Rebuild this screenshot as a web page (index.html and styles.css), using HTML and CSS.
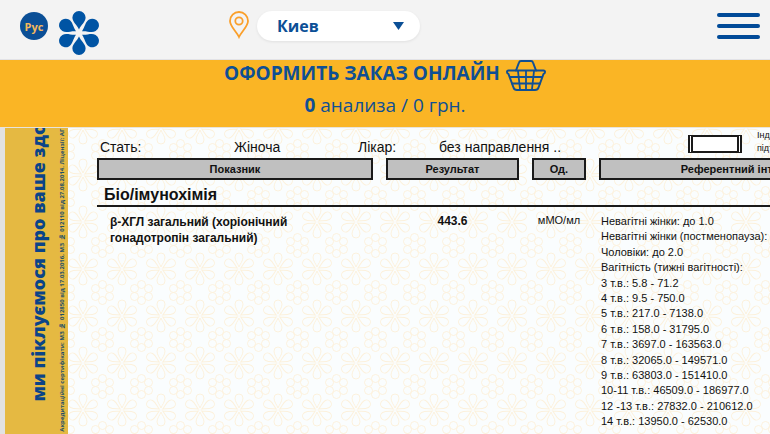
FILE: index.html
```
<!DOCTYPE html>
<html lang="ru">
<head>
	<meta charset="utf-8">
	<meta name="viewport" content="width=device-width, initial-scale=1">
	<title>Результаты анализов</title>
	<link rel="stylesheet" href="styles.css">
</head>
<body>
	<header class="topbar">
		<button type="button" class="lang">Рус</button>
		<a href="#" class="logo" aria-label="На главную">
			<svg width="44" height="46" viewBox="-22 -22 44 46" fill="#0054a4">
				<defs>
					<path id="petal" d="M0-3.500C-2-8-6.600-11-6.600-15.400a6.600 6.600 0 0 1 13.200 0C6.600-11 2-8 0-3.500z"/>
				</defs>
				<use href="#petal"/>
				<use href="#petal" transform="rotate(60)"/>
				<use href="#petal" transform="rotate(120)"/>
				<use href="#petal" transform="rotate(180)"/>
				<use href="#petal" transform="rotate(240)"/>
				<use href="#petal" transform="rotate(300)"/>
			</svg>
		</a>
		<div class="city">
			<svg width="20" height="28" viewBox="0 0 20 28" fill="none" stroke="#fa9f2a" stroke-width="1.8">
				<path d="M10 26C7.500 20.500 1 15.500 1 10a9 9 0 0 1 18 0c0 5.500-6.500 10.500-9 16z"/>
				<circle cx="10" cy="10" r="3.700"/>
			</svg>
			<select class="city-select" aria-label="Город">
				<option>Киев</option>
			</select>
		</div>
		<button type="button" class="menu" aria-label="Меню">
			<span></span>
			<span></span>
			<span></span>
		</button>
	</header>

	<section class="order">
		<a href="#" class="order-link">
			ОФОРМИТЬ ЗАКАЗ ОНЛАЙН
			<svg width="40" height="32" viewBox="0 0 40 32" fill="none" stroke="#0f4f94" stroke-width="2" stroke-linejoin="round" stroke-linecap="round">
				<path d="M10 10.500L13 2.500Q13.500 1 15 1h10q1.500 0 2 1.500L30 10.500"/>
				<path d="M2.500 10.500h35q1.500 0 1.500 1.500t-1.500 2L32.500 27.500q-.7 2.500-3.500 2.500H11q-2.800 0-3.500-2.500L2.500 14Q1 13.500 1 12t1.500-1.500z"/>
				<path d="M4 17h32M6 23.500h28M12 11l2 18M20 11v18M28 11l-2 18" stroke-width="1.800"/>
			</svg>
		</a>
		<p class="order-total"><b>0</b> анализа / 0 грн.</p>
	</section>

	<main class="sheet" lang="uk">
		<aside class="stripe">
			<p class="slogan">ми піклуємося про ваше здоров'я</p>
			<p class="licence">Акредитаційні сертифікати: МЗ № 012850 від 17.03.2016, МЗ № 012110 від 27.08.2014. Ліцензії: АГ 599651 від 27.12.2011</p>
		</aside>
		<div class="report">
			<div class="patient">
				<span>Стать:</span>
				<span>Жіноча</span>
				<span>Лікар:</span>
				<span>без направлення ..</span>
				<span class="mark"></span>
				<span class="mark-note">Індикатор<br>підтвердження</span>
			</div>
			<table class="results">
				<thead>
					<tr>
						<th class="col-name">Показник</th>
						<th class="col-value">Результат</th>
						<th class="col-unit">Од.</th>
						<th class="col-range">Референтний інтервал</th>
					</tr>
				</thead>
				<tbody>
					<tr>
						<td colspan="4" class="group">Біо/імунохімія</td>
					</tr>
					<tr>
						<td class="name">β-ХГЛ загальний (хоріонічний гонадотропін загальний)</td>
						<td class="value">443.6</td>
						<td class="unit">мМО/мл</td>
						<td class="range">
							<ul>
								<li>Невагітні жінки: до 1.0</li>
								<li>Невагітні жінки (постменопауза): до 7.0</li>
								<li>Чоловіки: до 2.0</li>
								<li>Вагітність (тижні вагітності):</li>
								<li>3 т.в.: 5.8 - 71.2</li>
								<li>4 т.в.: 9.5 - 750.0</li>
								<li>5 т.в.: 217.0 - 7138.0</li>
								<li>6 т.в.: 158.0 - 31795.0</li>
								<li>7 т.в.: 3697.0 - 163563.0</li>
								<li>8 т.в.: 32065.0 - 149571.0</li>
								<li>9 т.в.: 63803.0 - 151410.0</li>
								<li>10-11 т.в.: 46509.0 - 186977.0</li>
								<li>12 -13 т.в.: 27832.0 - 210612.0</li>
								<li>14 т.в.: 13950.0 - 62530.0</li>
							</ul>
						</td>
					</tr>
				</tbody>
			</table>
		</div>
	</main>
</body>
</html>
```
FILE: styles.css
```
* {
	box-sizing: border-box;
	margin: 0;
	padding: 0;
}

body {
	font-family: "Open Sans", "Noto Sans", sans-serif;
	background-color: #e2e2e2;
	height: 100vh;
	display: flex;
	flex-direction: column;
	overflow: hidden;
}

/* top bar */
.topbar {
	background-color: #f3f3f3;
	border-bottom: 1px solid #e2e2e6;
	display: flex;
	align-items: flex-start;
	flex-shrink: 0;
	padding: 11px 10px 2px 20px;
}

.lang {
	width: 28px;
	height: 28px;
	margin-top: 1px;
	border: none;
	border-radius: 50%;
	background-color: #0b4f96;
	color: #f5b95c;
	font-family: inherit;
	font-size: 11px;
	font-weight: bold;
	cursor: pointer;
}

.logo {
	margin-left: 9px;
}

.logo svg,
.city svg,
.order-link svg {
	display: block;
}

.city {
	display: flex;
	gap: 8px;
	margin-left: 128px;
}

.city-select {
	appearance: none;
	width: 163px;
	height: 30px;
	padding: 0 20px;
	border: none;
	border-radius: 15px;
	background: #fff url("data:image/svg+xml,%3Csvg xmlns='http://www.w3.org/2000/svg' width='11' height='8'%3E%3Cpath d='M0 0h11L5.500 8z' fill='%230b4f96'/%3E%3C/svg%3E") no-repeat right 16px center;
	box-shadow: 0 1px 3px rgba(0, 0, 0, 0.08);
	color: #0b4f96;
	font-family: inherit;
	font-size: 16px;
	font-weight: bold;
}

.menu {
	display: flex;
	flex-direction: column;
	gap: 7px;
	width: 43px;
	margin-left: auto;
	padding: 2px 0;
	border: none;
	background: none;
	cursor: pointer;
}

.menu span {
	height: 4px;
	border-radius: 2px;
	background-color: #004a98;
}

/* order banner */
.order {
	background-color: #fab525;
	border-bottom: 1px solid #e8e4dc;
	color: #0f4f94;
	flex-shrink: 0;
	padding-bottom: 9px;
}

.order-link {
	display: flex;
	justify-content: center;
	gap: 6px;
	color: inherit;
	font-size: 19px;
	font-weight: bold;
	line-height: 26px;
	text-decoration: none;
}

.order-total {
	font-size: 19px;
	line-height: 26px;
	text-align: center;
}

/* scanned lab report */
.sheet {
	display: flex;
	flex: 1;
	min-height: 0;
	margin-left: 5px;
	overflow: hidden;
	background-color: #fafdfe;
	background-image: url("data:image/svg+xml,%3Csvg xmlns='http://www.w3.org/2000/svg' width='39' height='47' viewBox='0 0 39 47'%3E%3Cdefs%3E%3Cpath id='p' d='M0-2C-1-5-4-8-4-12a4 4 0 0 1 8 0C4-8 1-5 0-2z'/%3E%3Cg id='f'%3E%3Cuse href='%23p'/%3E%3Cuse href='%23p' transform='rotate(60)'/%3E%3Cuse href='%23p' transform='rotate(120)'/%3E%3Cuse href='%23p' transform='rotate(180)'/%3E%3Cuse href='%23p' transform='rotate(240)'/%3E%3Cuse href='%23p' transform='rotate(300)'/%3E%3C/g%3E%3C/defs%3E%3Cg fill='none' stroke='%23fcf1dc'%3E%3Cuse href='%23f' x='0' y='0'/%3E%3Cuse href='%23f' x='39' y='0'/%3E%3Cuse href='%23f' x='0' y='47'/%3E%3Cuse href='%23f' x='39' y='47'/%3E%3Ccircle cx='19.500' cy='15.500' r='4'/%3E%3Ccircle cx='19.500' cy='31.500' r='4'/%3E%3Ccircle cx='12.500' cy='19.500' r='4'/%3E%3Ccircle cx='26.500' cy='19.500' r='4'/%3E%3Ccircle cx='12.500' cy='27.500' r='4'/%3E%3Ccircle cx='26.500' cy='27.500' r='4'/%3E%3C/g%3E%3C/svg%3E");
	color: #111;
	font-family: "Liberation Sans", Arial, sans-serif;
}

.stripe {
	display: flex;
	flex-shrink: 0;
	gap: 4px;
	justify-content: flex-end;
	align-items: flex-end;
	width: 63px;
	background-color: #e5b942;
	color: #0b4488;
	font-family: "Open Sans", "Noto Sans", sans-serif;
	white-space: nowrap;
}

.stripe p {
	writing-mode: vertical-rl;
	transform: rotate(180deg);
}

.slogan {
	padding-top: 32px;
	font-size: 18px;
	font-weight: 800;
	line-height: 28px;
}

.licence {
	padding-top: 2px;
	color: #1f5068;
	font-size: 6px;
	font-weight: bold;
	line-height: 12px;
}

.report {
	flex: 1;
	padding-top: 11px;
	padding-left: 16px;
}

.patient {
	display: grid;
	grid-template-columns: 134px 124px 81px 249px 69px max-content;
	margin-bottom: 3px;
	padding-left: 16px;
	font-size: 14px;
	line-height: 16px;
}

.mark {
	width: 54px;
	height: 18px;
	margin-top: -4px;
	border: 1px solid #1a1a1a;
	border-width: 2px 5px;
	border-style: solid double;
	background-color: #fff;
}

.mark-note {
	height: 19px;
	margin-top: -10px;
	font-size: 9px;
	line-height: 13px;
}

.results {
	width: max-content;
	table-layout: fixed;
	border-spacing: 13px 0;
	font-size: 11px;
}

.results th {
	height: 22px;
	border: 2px solid #1a1a1a;
	background-color: #c0c0c0;
}

.col-name {
	width: 276px;
}

.col-value {
	width: 133px;
}

.col-unit {
	width: 54px;
}

.col-range {
	width: 288px;
}

.results td {
	vertical-align: top;
}

.results .group {
	padding: 5px 7px 0;
	border-bottom: 2px solid #1a1a1a;
	font-size: 16px;
	font-weight: bold;
	line-height: 20px;
}

.results .name {
	padding: 7px 60px 0 13px;
	font-size: 12px;
	font-weight: bold;
	line-height: 16px;
}

.results .value {
	padding-top: 6px;
	font-size: 12px;
	font-weight: bold;
	line-height: 16px;
	text-align: center;
}

.results .unit {
	padding-top: 5px;
	line-height: 16px;
	text-align: center;
}

.results .range {
	padding: 7px 0 0 2px;
}

.range ul {
	list-style: none;
	line-height: 1.4;
	white-space: nowrap;
}
```
